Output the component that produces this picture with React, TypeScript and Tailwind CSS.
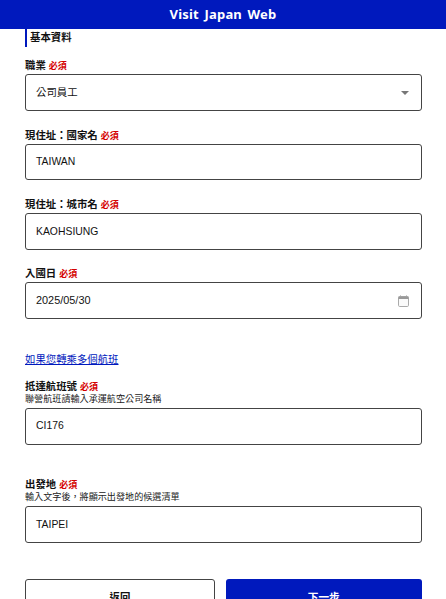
const font = "font-['Liberation_Sans','Noto_Sans_CJK_TC',sans-serif]";

function Required() {
  return <span className="ml-[3px] text-[9px] font-bold text-[#d40000]">必須</span>;
}

function Label({ text }: { text: string }) {
  return (
    <div className="flex h-[16px] items-center text-[10.4px] font-bold leading-none text-[#111]">
      {text}
      <Required />
    </div>
  );
}

function Hint({ text, className }: { text: string; className?: string }) {
  return <div className={`text-[9.1px] leading-[9px] text-[#222] ${className ?? ""}`}>{text}</div>;
}

function Box({ children, className }: { children: React.ReactNode; className?: string }) {
  return (
    <div className={`flex items-center justify-between rounded-[3px] border border-[#444] bg-white pl-[10px] pr-[12px] text-[10.4px] text-[#111] ${className ?? "h-[37px]"}`}>
      {children}
    </div>
  );
}

export default function App() {
  return (
    <div className={`h-[599px] w-[446px] overflow-hidden bg-white ${font}`}>
      <header className="flex h-[29px] items-center justify-center bg-[#0019bd] text-[13px] font-bold tracking-[0.2px] text-white [word-spacing:2px] font-['Noto_Sans',sans-serif]">
        Visit Japan Web
      </header>

      <div className="pl-[25px] pr-[24px]">
        <div className="flex h-[18px] items-center border-l-[2px] border-[#0019bd] pl-[3px] text-[10.4px] font-bold text-[#111]">
          基本資料
        </div>

        <div className="mt-[11px]">
          <Label text="職業" />
          <Box className="h-[37px] pr-[10px]">
            <span>公司員工</span>
            <span className="mt-[1px] h-0 w-0 border-x-[4px] border-t-[4px] border-x-transparent border-t-[#777]" />
          </Box>
        </div>

        <div className="mt-[17px]">
          <Label text="現住址：國家名" />
          <Box className="h-[36px]">TAIWAN</Box>
        </div>

        <div className="mt-[17px]">
          <Label text="現住址：城市名" />
          <Box>KAOHSIUNG</Box>
        </div>

        <div className="mt-[16px]">
          <Label text="入國日" />
          <Box>
            <span className="text-[10.9px]">2025/05/30</span>
            <svg width="11" height="12" viewBox="0 0 11 12">
              <path d="M2.5 0.5v2M8.5 0.5v2" stroke="#999" strokeWidth="1" />
              <rect x="0.5" y="1.5" width="10" height="10" rx="1.2" fill="#fafafa" stroke="#aaa" />
              <rect x="0.5" y="1.5" width="10" height="2.5" fill="#999" />
            </svg>
          </Box>
        </div>

        <a className="mt-[33px] block h-[16px] text-[10.4px] leading-[16px] text-[#0019bd] underline">如果您轉乘多個航班</a>

        <div className="mt-[11px]">
          <Label text="抵達航班號" />
          <Hint text="聯營航班請輸入承運航空公司名稱" className="h-[12.5px]" />
          <Box>CI176</Box>
        </div>

        <div className="mt-[32.5px]">
          <Label text="出發地" />
          <Hint text="輸入文字後，將顯示出發地的候選清單" className="h-[13px]" />
          <Box>TAIPEI</Box>
        </div>

        <div className="mt-[36px] flex gap-[10.5px]">
          <button className="h-[37px] w-[190px] rounded-[3px] border border-[#444] bg-white text-[10.4px] font-bold text-[#111]">返回</button>
          <button className="h-[37px] flex-1 rounded-[3px] bg-[#0019bd] text-[10.6px] font-bold text-white">下一步</button>
        </div>
      </div>
    </div>
  );
}
